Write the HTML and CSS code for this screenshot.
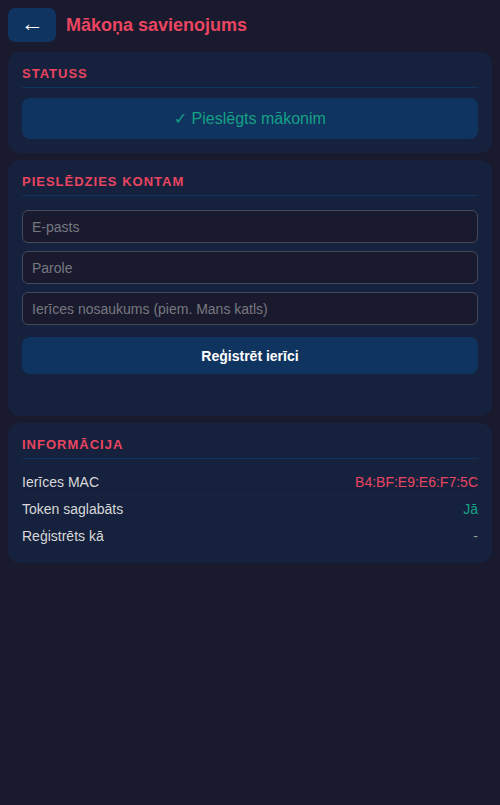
FILE: index.html
```html
<!DOCTYPE html>
<html lang="lv">
<head>
<meta charset="utf-8">
<title>Mākoņa savienojums</title>
<link rel="stylesheet" href="styles.css">
</head>
<body>
<div class="page">
  <header class="header">
    <button class="back">←</button>
    <h1 class="title">Mākoņa savienojums</h1>
  </header>

  <section class="card">
    <h2 class="card-title">Statuss</h2>
    <div class="status">✓ Pieslēgts mākonim</div>
  </section>

  <section class="card card-login">
    <h2 class="card-title">Pieslēdzies kontam</h2>
    <div class="form">
      <input class="field" type="email" placeholder="E-pasts">
      <input class="field" type="password" placeholder="Parole">
      <input class="field" type="text" placeholder="Ierīces nosaukums (piem. Mans katls)">
      <button class="submit">Reģistrēt ierīci</button>
    </div>
  </section>

  <section class="card">
    <h2 class="card-title">Informācija</h2>
    <div class="rows">
      <div class="row"><span>Ierīces MAC</span><span class="val-red">B4:BF:E9:E6:F7:5C</span></div>
      <div class="row"><span>Token saglabāts</span><span class="val-green">Jā</span></div>
      <div class="row"><span>Reģistrēts kā</span><span class="val-gray">-</span></div>
    </div>
  </section>
</div>
</body>
</html>
```
FILE: styles.css
```css
* { box-sizing: border-box; }
html, body {
  margin: 0;
  padding: 0;
  background: #1a1a2e;
  font-family: "Liberation Sans", Arial, sans-serif;
  color: #dcdcdc;
}
.page {
  padding: 8px;
  display: flex;
  flex-direction: column;
  gap: 7px;
}
.header {
  display: flex;
  align-items: center;
  gap: 10px;
  margin-bottom: 3px;
}
.back {
  width: 48px;
  height: 34px;
  border: none;
  border-radius: 7px;
  background: #0f3460;
  color: #ffffff;
  font-size: 23px;
  font-family: "Liberation Sans", Arial, sans-serif;
  padding: 0 0 3px 0;
  line-height: 1;
}
.title {
  margin: 0;
  font-size: 18px;
  font-weight: bold;
  color: #e94560;
}
.card {
  background: #16213e;
  border-radius: 12px;
  padding: 14px;
}
.card-title {
  margin: 0 0 10px 0;
  padding-bottom: 6px;
  border-bottom: 1px solid #0f3460;
  font-size: 13px;
  line-height: 15px;
  font-weight: bold;
  letter-spacing: 1px;
  text-transform: uppercase;
  color: #e94560;
}
.status {
  background: #0f3460;
  border-radius: 8px;
  height: 41px;
  display: flex;
  align-items: center;
  justify-content: center;
  font-size: 16px;
  color: #16a085;
}
.card-login { padding-bottom: 42px; }
.form {
  display: flex;
  flex-direction: column;
  gap: 8px;
  padding-top: 4px;
}
.field {
  height: 33px;
  border: 1px solid #444a58;
  border-radius: 6px;
  background: #1a1a2e;
  color: #dddddd;
  font-family: "Liberation Sans", Arial, sans-serif;
  font-size: 14px;
  padding: 0 9px;
  outline: none;
}
.field::placeholder { color: #76787f; }
.submit {
  margin-top: 4px;
  height: 37px;
  border: none;
  border-radius: 8px;
  background: #0f3460;
  color: #ffffff;
  font-family: "Liberation Sans", Arial, sans-serif;
  font-size: 14px;
  font-weight: bold;
}
.rows { display: flex; flex-direction: column; }
.row {
  display: flex;
  justify-content: space-between;
  font-size: 14px;
  line-height: 17px;
  padding: 5px 0 4px 0;
  border-bottom: 1px solid #182443;
  color: #d8d8d8;
}
.row:last-child { border-bottom: none; }
.val-red { color: #e94560; }
.val-green { color: #16a085; }
.val-gray { color: #9a9a9a; }
```
